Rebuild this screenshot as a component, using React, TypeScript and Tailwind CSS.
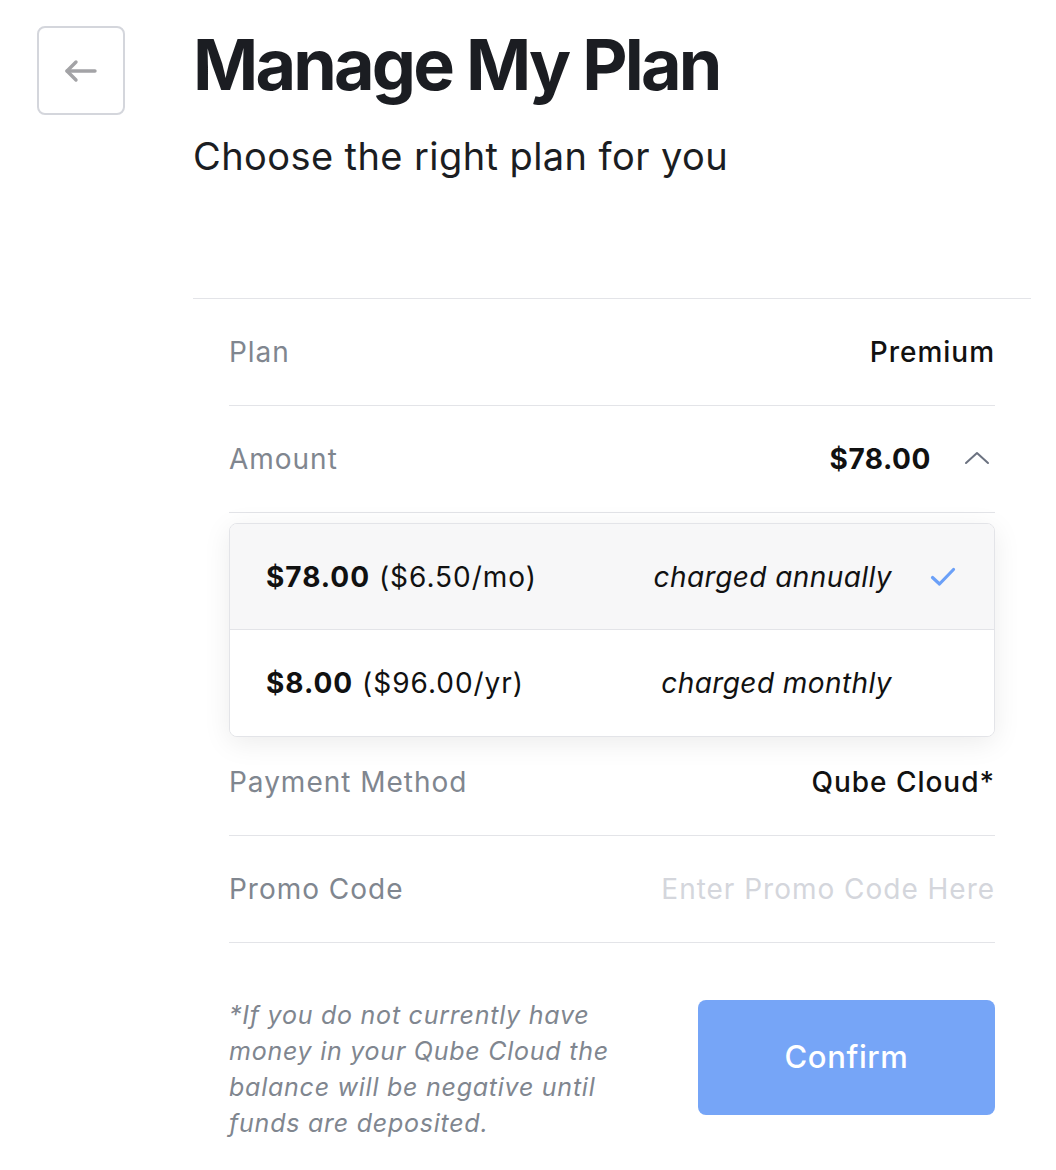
import { useState } from 'react';

function BackArrow() {
    return (
        <svg width="34" height="24" viewBox="0 0 34 24" fill="none" stroke="#a3a3a6" strokeWidth="3.4" strokeLinecap="round" strokeLinejoin="round">
            <path d="M31 12H3" />
            <path d="M12 3L3 12l9 9" />
        </svg>
    );
}

function ChevronUp() {
    return (
        <svg width="26" height="14" viewBox="0 0 26 14" fill="none" stroke="#6b7280" strokeWidth="2" strokeLinecap="round" strokeLinejoin="round">
            <path d="M2 12L13 2l11 10" />
        </svg>
    );
}

function Check() {
    return (
        <svg width="26" height="20" viewBox="0 0 26 20" fill="none" stroke="#6ba0f8" strokeWidth="3.2" strokeLinecap="round" strokeLinejoin="round">
            <path d="M2.5 10.5l7 6.5L23.5 2.5" />
        </svg>
    );
}

function Row({ label, children }: { label: string; children: React.ReactNode }) {
    return (
        <div className="h-[107px] flex items-center justify-between border-b border-[#e3e4e8]">
            <span className="text-[28px] tracking-[0.035em] text-[#80868f]">{label}</span>
            {children}
        </div>
    );
}

function PlanOption({ price, sub, note, selected }: { price: string; sub: string; note: string; selected: boolean }) {
    return (
        <div className={`h-[106px] flex items-center pl-[36px] ${selected ? 'bg-[#f7f7f8] border-b border-[#e3e4e8]' : 'bg-white'}`}>
            <span className="text-[28px] tracking-[0.035em] text-[#111]">
                <span className="font-bold">{price}</span> {sub}
            </span>
            <span className="ml-auto text-[28px] italic tracking-[0.015em] text-[#111]">{note}</span>
            <span className="w-[102px] flex items-center justify-center">
                {selected && <Check />}
            </span>
        </div>
    );
}

export default function App() {
    const [promo, setPromo] = useState('');

    return (
        <div className="w-[1056px] min-h-[1170px] bg-white flex items-start pl-[37px] pt-[26px]" style={{ fontFamily: 'Inter, "Noto Sans", sans-serif' }}>
            <button className="w-[88px] h-[89px] shrink-0 rounded-lg border-2 border-[#d4d6dc] flex items-center justify-center">
                <BackArrow />
            </button>

            <div className="ml-[68px] w-[838px]">
                <h1 className="mt-[4px] text-[70px] leading-none font-bold tracking-[-0.04em] text-[#1b1d22]">Manage My Plan</h1>
                <p className="mt-[37px] text-[38px] leading-none tracking-[0.011em] text-[#1b1d22]">Choose the right plan for you</p>

                <div className="mt-[123px] border-t border-[#e3e4e8] px-[36px]">
                    <Row label="Plan">
                        <span className="text-[28px] tracking-[0.035em] font-medium text-[#111]">Premium</span>
                    </Row>

                    <Row label="Amount">
                        <div className="flex items-center gap-[33px]">
                            <span className="text-[28px] tracking-[0.02em] font-bold text-[#111]">$78.00</span>
                            <span className="pr-[5px] pb-[2px]"><ChevronUp /></span>
                        </div>
                    </Row>

                    <div className="relative z-10 mt-[10px] mb-[-8px] rounded-lg border border-[#e3e4e8] overflow-hidden bg-white shadow-[0_6px_28px_rgba(0,0,0,0.08)]">
                        <PlanOption price="$78.00" sub="($6.50/mo)" note="charged annually" selected />
                        <PlanOption price="$8.00" sub="($96.00/yr)" note="charged monthly" selected={false} />
                    </div>

                    <Row label="Payment Method">
                        <span className="text-[28px] tracking-[0.035em] font-medium text-[#111]">Qube Cloud*</span>
                    </Row>

                    <Row label="Promo Code">
                        <input
                            value={promo}
                            onChange={e => setPromo(e.target.value)}
                            placeholder="Enter Promo Code Here"
                            className="w-[420px] text-right text-[28px] tracking-[0.035em] text-[#111] placeholder:text-[#d4d6dc] outline-none bg-transparent"
                        />
                    </Row>

                    <div className="mt-[54px] flex items-start justify-between">
                        <p className="w-[400px] text-[25px] leading-[36px] italic tracking-[0.03em] text-[#80868f]">
                            *If you do not currently have money in your Qube Cloud the balance will be negative until funds are deposited.
                        </p>
                        <button className="mt-[3px] w-[297px] h-[115px] rounded-lg bg-[#76a5f7] text-white text-[31px] tracking-[0.02em] font-medium">
                            Confirm
                        </button>
                    </div>
                </div>
            </div>
        </div>
    );
}
